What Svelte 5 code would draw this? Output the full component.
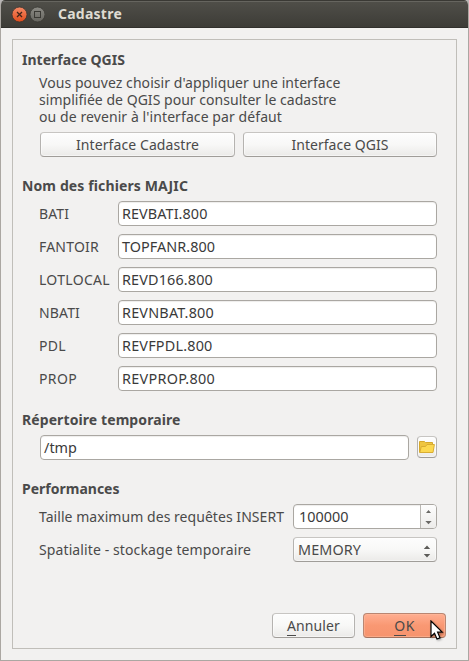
<script>
  const files = [
    { label: 'BATI', lw: 30, value: 'REVBATI.800', w: 85.5 },
    { label: 'FANTOIR', lw: 60, value: 'TOPFANR.800', w: 93 },
    { label: 'LOTLOCAL', lw: 71, value: 'REVD166.800', w: 91 },
    { label: 'NBATI', lw: 41, value: 'REVNBAT.800', w: 92 },
    { label: 'PDL', lw: 27, value: 'REVFPDL.800', w: 90.5 },
    { label: 'PROP', lw: 38, value: 'REVPROP.800', w: 93 }
  ];

  // Spreads the tracking of a label so that it takes the given width.
  function fit(node, width) {
    const natural = node.getBoundingClientRect().width;
    node.style.letterSpacing = `${(width - natural) / node.textContent.length}px`;
  }
</script>

{#snippet text(value, width)}<span class="text" use:fit={width}>{value}</span>{/snippet}

<div class="desktop">
  <div class="window">
    <header>
      <svg class="controls" width="34" height="18" viewBox="0 0 34 18">
        <defs>
          <linearGradient id="close" x1="0" y1="0" x2="0" y2="1">
            <stop offset="0" stop-color="#f58a66" /><stop offset="1" stop-color="#e04c1c" />
          </linearGradient>
          <linearGradient id="max" x1="0" y1="0" x2="0" y2="1">
            <stop offset="0" stop-color="#8b8a84" /><stop offset="1" stop-color="#66655f" />
          </linearGradient>
        </defs>
        <circle cx="8.5" cy="8.5" r="7.5" fill="url(#close)" stroke="#3b342e" stroke-width=".8" />
        <path d="M6 6 11 11M11 6 6 11" stroke="#41251a" stroke-width="1.3" />
        <circle cx="26.5" cy="8.5" r="7.5" fill="url(#max)" stroke="#3a3934" stroke-width=".8" />
        <rect x="23.5" y="5.5" width="6" height="6" fill="none" stroke="#3a3934" />
      </svg>
      <h1>{@render text('Cadastre', 64)}</h1>
    </header>

    <main>
      <section>
        <h2>{@render text('Interface QGIS', 103)}</h2>
        <div class="indent intro">
          <p>{@render text("Vous pouvez choisir d'appliquer une interface", 301.5)}</p>
          <p>{@render text('simplifiée de QGIS pour consulter le cadastre', 297.5)}</p>
          <p>{@render text("ou de revenir à l'interface par défaut", 243)}</p>
        </div>
        <div class="indent buttons">
          <button class="wide first">{@render text('Interface Cadastre', 123)}</button>
          <button class="wide">{@render text('Interface QGIS', 97)}</button>
        </div>
      </section>

      <section>
        <h2>{@render text('Nom des fichiers MAJIC', 166)}</h2>
        <div class="indent rows">
          {#each files as f}
            <div class="row">
              <span class="label">{@render text(f.label, f.lw)}</span>
              <div class="field">{@render text(f.value, f.w)}</div>
            </div>
          {/each}
        </div>
      </section>

      <section>
        <h2>{@render text('Répertoire temporaire', 158.5)}</h2>
        <div class="indent row dir">
          <div class="field path">{@render text('/tmp', 33)}</div>
          <button class="browse" aria-label="Parcourir">
            <svg width="16" height="14" viewBox="0 0 16 14">
              <path d="M.5 12.5V1.5H5.5L6.5 2.5H13.5V5" fill="#efc540" stroke="#d5a82c" />
              <path d="M.8 12.5 2.3 6.5H6.5L8 4.5H15.4L14 12.5Z" fill="#fcd850" stroke="#d9ad32" />
            </svg>
          </button>
        </div>
      </section>

      <section>
        <h2>{@render text('Performances', 97.5)}</h2>
        <div class="indent rows">
          <div class="row spread">
            <span>{@render text('Taille maximum des requêtes INSERT', 245)}</span>
            <div class="field spin">
              {@render text('100000', 49.5)}
              <svg class="steps" width="15" height="23" viewBox="0 0 15 23">
                <path d="M5 8 7.5 5 10 8ZM4.3 16H10.7L7.5 19.3Z" fill="#6a6966" />
              </svg>
            </div>
          </div>
          <div class="row spread">
            <span>{@render text('Spatialite - stockage temporaire', 212)}</span>
            <div class="combo">
              {@render text('MEMORY', 63)}
              <svg width="8" height="13" viewBox="0 0 8 13">
                <path d="M.8 4 4 .4 7.2 4ZM.8 9H7.2L4 12.6Z" fill="#5c5b58" />
              </svg>
            </div>
          </div>
        </div>
      </section>

      <footer>
        <button class="action"><span class="text" use:fit={53}><u>A</u>nnuler</span></button>
        <button class="action ok"><span class="text" use:fit={20.5}><u>O</u>K</span></button>
        <svg class="pointer" width="14" height="21" viewBox="0 0 14 21">
          <path d="M1 1V16.5L4.5 13.2 7 19 10 17.8 7.6 12.2H12.2Z" fill="#fff" stroke="#000" stroke-width="1.2" />
        </svg>
      </footer>
    </main>
  </div>
</div>

<style>
  .desktop { width: 469px; height: 661px; background: #b9b6b6; }
  .window {
    box-sizing: border-box; width: 469px; height: 661px; overflow: hidden;
    border-radius: 5px 5px 0 0; background: #f2f1f0;
    border: 1px solid #aba7a2; border-top: 0;
    font: 14px/17px "Noto Sans", sans-serif; color: #4a4a4a;
  }
  .text { display: inline-block; white-space: pre; }
  header {
    box-sizing: border-box; height: 28px; margin: 0 -1px; padding: 0 0 0 11px;
    display: flex; align-items: center;
    background: linear-gradient(#504f49, #3d3c37);
    border-top: 1px solid #3a3934; border-bottom: 1px solid #31302c;
    box-shadow: inset 0 1px #66655f;
  }
  .controls { margin-top: 2px; }
  h1 { margin: 0 0 1px 13px; font-size: 14px; line-height: 17px; color: #dfdbd2; }
  main {
    box-sizing: border-box; width: 445px; height: 610px; margin: 11px 0 0 11px;
    padding: 11px 10px 0 9px; border: 1px solid #c0beb9;
  }
  section { margin: 0 9px 20px 0; }
  h2 { margin: 0; font-size: 14px; line-height: 17px; height: 17px; }
  p { margin: 0; height: 17px; font-size: 14px; }
  .indent { padding-left: 18px; margin-top: 7px; }
  .intro { padding-left: 17px; margin-top: 6px; }
  .buttons { display: flex; gap: 8px; }
  button, .combo {
    box-sizing: border-box; height: 25px; padding: 0; font: inherit; line-height: 23px;
    color: #4a4a4a; border: 1px solid #b5b3b0; border-top-color: #c7c5c2; border-bottom-color: #a09d99;
    border-radius: 4px; background: linear-gradient(#fdfdfd, #f8f8f7 50%, #ebeae8);
    box-shadow: inset 0 0 0 1px rgba(255, 255, 255, .5);
    text-align: center;
  }
  .wide { width: 194px; }
  .wide.first { width: 195px; }
  .rows { display: flex; flex-direction: column; gap: 8px; }
  .row { display: flex; line-height: 25px; height: 25px; }
  .rows .row { margin-left: -1px; }
  .label { width: 79px; flex: none; }
  .field {
    box-sizing: border-box; flex: 1; height: 25px; line-height: 23px; padding-left: 3px;
    background: #fff; color: #3a3a3a; border: 1px solid #aaa7a2; border-radius: 4px;
    box-shadow: inset 0 1px 1px #eeedec; font-size: 14.4px;
  }
  .dir { gap: 8px; }
  .browse {
    width: 20px; height: 22px; margin-top: 1px; display: flex; align-items: center; justify-content: center;
  }
  .browse svg { flex: none; }
  .spread { justify-content: space-between; }
  .field.spin, .combo { flex: none; width: 144px; display: flex; justify-content: space-between; }
  .field.spin { padding-left: 5px; overflow: hidden; }
  .steps { border-left: 1px solid #b9b7b3; background: linear-gradient(#fdfdfd, #edecea); }
  .combo { padding: 0 5px 0 4px; align-items: center; font-size: 14.4px; }
  .combo svg { margin-top: 4px; }
  footer { position: relative; margin-top: 51px; display: flex; justify-content: flex-end; gap: 8px; }
  .action { width: 83px; }
  u { text-decoration: none; box-shadow: 0 1px #4a4a4a; display: inline-block; line-height: 19px; }
  .ok {
    background: linear-gradient(#ffae91, #f99873 50%, #f6936d);
    border-color: #b98672; border-bottom-color: #a5735f;
    box-shadow: inset 0 0 0 1px rgba(255, 190, 160, .5);
  }
  .pointer { position: absolute; right: 2px; top: 7px; filter: drop-shadow(1px 1px 1px rgba(0, 0, 0, .35)); }
</style>
